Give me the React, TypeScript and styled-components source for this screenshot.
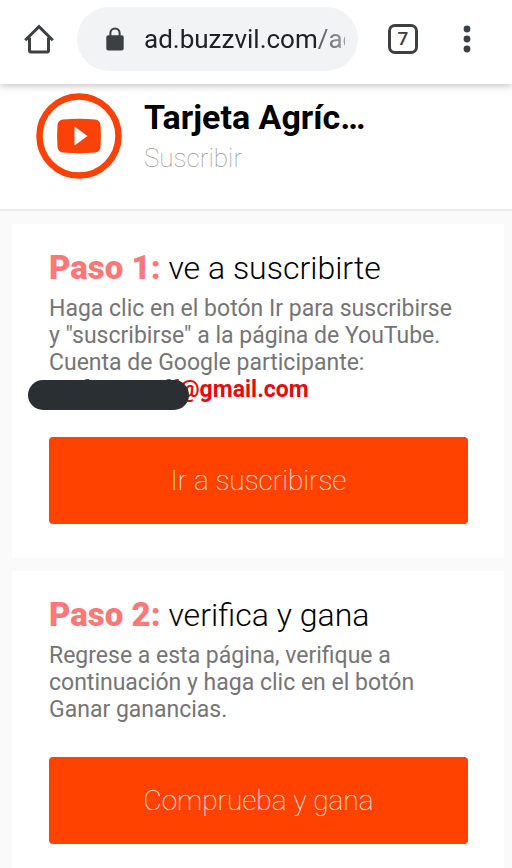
import React from 'react';
import styled, { createGlobalStyle } from 'styled-components';

const GlobalStyle = createGlobalStyle`
  *, *::before, *::after { box-sizing: border-box; }
  body {
    margin: 0;
    background: #fafafa;
    color: #000;
    font-family: Roboto, "Liberation Sans", sans-serif;
  }
  h1, h2, p { margin: 0; }
  button { border: 0; padding: 0; font-family: inherit; cursor: pointer; }
`;

const BrowserBar = styled.header`
  position: relative;
  display: flex;
  align-items: center;
  height: 84px;
  padding: 0 41px 6px 24px;
  background: #fff;
  box-shadow: 0 1px 8px rgba(0, 0, 0, 0.28);
`;

const IconButton = styled.button`
  display: flex;
  flex: none;
  background: none;
  color: #3c4043;
`;

const AddressBar = styled.button`
  display: flex;
  flex: 1;
  align-items: center;
  gap: 20px;
  min-width: 0;
  height: 64px;
  margin: 0 30px 0 23px;
  padding: 0 13px 0 29px;
  border-radius: 32px;
  background: #f1f3f4;
  color: #202124;
  font-size: 26px;
  line-height: 32px;
  text-align: left;

  svg { flex: none; }
`;

const Url = styled.span`
  flex: 1;
  min-width: 0;
  overflow: hidden;
  white-space: nowrap;
  mask-image: linear-gradient(to left, rgba(0, 0, 0, 0.6), #000 24px);
`;

const UrlPath = styled.span`
  color: #5f6368;
`;

const TabsButton = styled(IconButton)`
  align-items: center;
  justify-content: center;
  width: 30px;
  height: 30px;
  margin-right: 45px;
  border: 3px solid #3c4043;
  border-radius: 7px;
  font-size: 19px;
  font-weight: 500;
  line-height: 24px;
`;

const Campaign = styled.section`
  display: flex;
  gap: 22px;
  padding: 9px 36px 30px;
  border-bottom: 2px solid #ebebeb;
  background: #fff;

  svg { flex: none; }
`;

const CampaignText = styled.div`
  flex: 1;
  min-width: 0;
  padding-top: 4px;
`;

const CampaignTitle = styled.h1`
  overflow: hidden;
  font-size: 34px;
  font-weight: 700;
  line-height: 40px;
  text-overflow: ellipsis;
  white-space: nowrap;
`;

const CampaignAction = styled.p`
  color: #999;
  font-size: 26px;
  font-weight: 100;
  line-height: 42px;
`;

const Steps = styled.main`
  display: grid;
  gap: 13px;
  padding: 13px 8px 13px 12px;
`;

const Card = styled.section`
  padding: 24px 36px 34px 37px;
  background: #fff;
`;

const StepTitle = styled.h2`
  font-size: 32px;
  font-weight: 300;
  line-height: 40px;
`;

const StepNumber = styled.span`
  color: #fb7878;
  font-size: 33px;
  font-weight: 900;
`;

const Description = styled.p`
  margin-top: 7px;
  color: #757575;
  font-size: 23px;
  line-height: 27px;
`;

const Account = styled.span`
  position: relative;
  display: flex;
  width: max-content;
  color: #e60a10;
  font-weight: 700;
`;

const Redaction = styled.span`
  position: absolute;
  top: 4px;
  left: -21px;
  width: 161px;
  height: 30px;
  border-radius: 15px;
  background: #2a2f33;
`;

const AccountName = styled.span`
  display: flex;
  justify-content: space-between;
  width: 130px;
  padding-left: 32px;
`;

const ActionButton = styled.button`
  display: block;
  width: 100%;
  height: 87px;
  margin-top: 34px;
  border-radius: 4px;
  background: #ff4200;
  color: #fff;
  font-size: 28px;
  font-weight: 100;
  line-height: 36px;
`;

function HomeIcon() {
  return (
    <svg width="30" height="30" viewBox="0 0 30 30" fill="none" stroke="currentColor" strokeWidth="3" aria-hidden="true">
      <path d="M1.2 16.2 15 2.6l13.8 13.6" />
      <path d="M5.5 13.5v13q0 1.5 1.5 1.5h16q1.5 0 1.5-1.5v-13" />
    </svg>
  );
}

function LockIcon() {
  return (
    <svg width="18" height="24" viewBox="0 0 18 24" aria-hidden="true">
      <path d="M4.4 9V6a4.6 4.6 0 0 1 9.2 0v3" fill="none" stroke="#3c4043" strokeWidth="2" />
      <rect x="0.3" y="8.2" width="17.4" height="15.2" rx="2" fill="#3c4043" />
    </svg>
  );
}

function MenuIcon() {
  return (
    <svg width="8" height="28" viewBox="0 0 8 28" fill="currentColor" aria-hidden="true">
      <circle cx="4" cy="4" r="3.4" />
      <circle cx="4" cy="14" r="3.4" />
      <circle cx="4" cy="24" r="3.4" />
    </svg>
  );
}

function VideoBadge() {
  return (
    <svg width="86" height="86" viewBox="0 0 86 86" aria-hidden="true">
      <circle cx="43" cy="43" r="39.5" fill="#fff" stroke="#fa4208" strokeWidth="6.5" />
      <path d="M27 26.5Q43 25 59 26.5Q64 27 64.5 32Q65.3 43 64.5 54Q64 59 59 59.5Q43 61 27 59.5Q22 59 21.5 54Q20.7 43 21.5 32Q22 27 27 26.5Z" fill="#fa4208" />
      <path d="M38.5 33.5v19L51.5 43z" fill="#fff" />
    </svg>
  );
}

interface StepProps {
  number: number;
  title: string;
  action: string;
  children: React.ReactNode;
}

function Step({ number, title, action, children }: StepProps) {
  return (
    <Card>
      <StepTitle>
        <StepNumber>Paso {number}:</StepNumber> {title}
      </StepTitle>
      <Description>{children}</Description>
      <ActionButton type="button">{action}</ActionButton>
    </Card>
  );
}

export default function App() {
  return (
    <>
      <GlobalStyle />
      <BrowserBar>
        <IconButton type="button" aria-label="Inicio">
          <HomeIcon />
        </IconButton>
        <AddressBar type="button">
          <LockIcon />
          <Url>
            ad.buzzvil.com<UrlPath>/ad</UrlPath>
          </Url>
        </AddressBar>
        <TabsButton type="button">7</TabsButton>
        <IconButton type="button" aria-label="Menú">
          <MenuIcon />
        </IconButton>
      </BrowserBar>
      <Campaign>
        <VideoBadge />
        <CampaignText>
          <CampaignTitle>Tarjeta Agríc…</CampaignTitle>
          <CampaignAction>Suscribir</CampaignAction>
        </CampaignText>
      </Campaign>
      <Steps>
        <Step number={1} title="ve a suscribirte" action="Ir a suscribirse">
          Haga clic en el botón Ir para suscribirse y "suscribirse" a la página de YouTube. Cuenta de Google participante:
          <Account>
            <AccountName>
              <span>f</span>
              <span>ff</span>
            </AccountName>
            @gmail.com
            <Redaction />
          </Account>
        </Step>
        <Step number={2} title="verifica y gana" action="Comprueba y gana">
          Regrese a esta página, verifique a continuación y haga clic en el botón Ganar ganancias.
        </Step>
      </Steps>
    </>
  );
}
